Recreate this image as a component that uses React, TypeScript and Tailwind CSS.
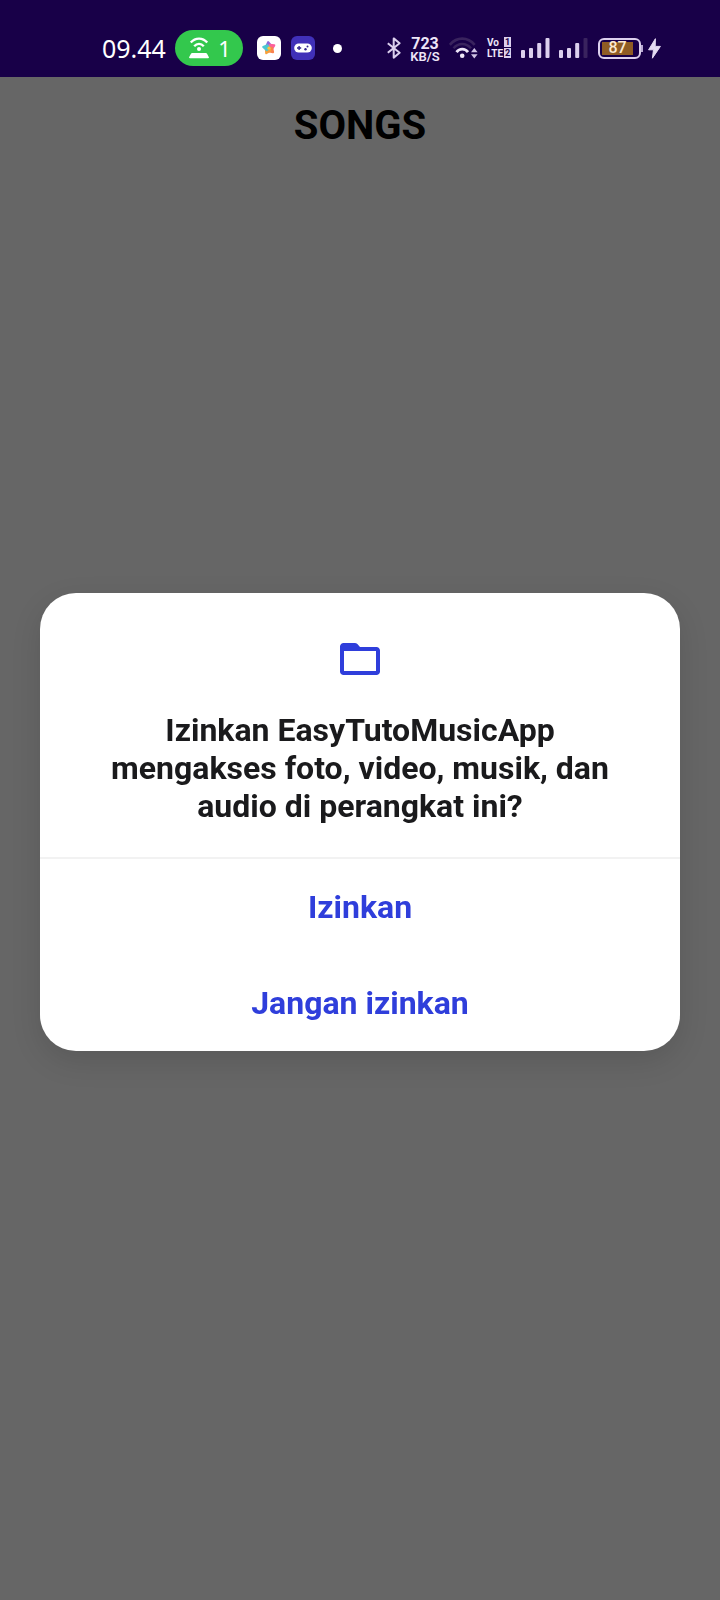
import React from "react";

function HotspotIcon() {
  return (
    <svg width="20" height="22" viewBox="0 0 20 22" fill="none" aria-hidden="true">
      <path d="M1.800 5.600C6.300.2 13.700.2 18.200 5.600" stroke="#fff" strokeWidth="2.300" />
      <path d="M5.200 9.200C8 6 12 6 14.800 9.200" stroke="#fff" strokeWidth="2.300" />
      <circle cx="10" cy="12" r="2" fill="#fff" />
      <path d="M3.200 16h13.600c.5 0 .9.200 1.100.6l1.900 3.400c.4.700 0 1.300-.8 1.300H1c-.8 0-1.200-.6-.8-1.300l1.900-3.400c.200-.4.600-.6 1.100-.6z" fill="#fff" />
    </svg>
  );
}

const petals = [
  { color: "#8d68dc", angle: -8 },
  { color: "#fb5f9c", angle: 64 },
  { color: "#f9824e", angle: 136 },
  { color: "#f8a03c", angle: 208 },
  { color: "#4cc6d2", angle: 280 },
];

function PetalsIcon() {
  return (
    <svg width="24" height="24" viewBox="0 0 24 24" aria-hidden="true">
      <rect width="24" height="24" rx="6" fill="#fff" />
      {petals.map((petal) => (
        <path
          key={petal.angle}
          d="M12 6.200L14.400 10 12 12.400 9.600 10z"
          fill={petal.color}
          stroke={petal.color}
          strokeWidth="2.200"
          strokeLinejoin="round"
          transform={`rotate(${petal.angle} 12 12)`}
        />
      ))}
      <circle cx="12" cy="12.200" r="1.600" fill="#ffc23f" />
    </svg>
  );
}

function GamepadIcon() {
  return (
    <svg width="24" height="24" viewBox="0 0 24 24" aria-hidden="true">
      <rect width="24" height="24" rx="6" fill="#4030b8" />
      <rect x="3.200" y="7.500" width="17.600" height="9" rx="4.500" fill="#fff" />
      <path d="M6 12h4.200M8.100 9.900v4.200" stroke="#33258f" strokeWidth="1.400" />
      <circle cx="16.500" cy="10.500" r="1" fill="#33258f" />
      <circle cx="14.500" cy="13.300" r="1.200" fill="#33258f" />
    </svg>
  );
}

function BluetoothIcon() {
  return (
    <svg width="14" height="22" viewBox="0 0 14 22" fill="none" stroke="#dcd0ee" strokeWidth="2" strokeLinejoin="round" aria-hidden="true">
      <path d="M.8 6.200l11.800 9.600L6.700 20.600V1.400l5.900 4.800L.8 15.800" />
    </svg>
  );
}

function WifiIcon() {
  return (
    <svg width="30" height="22" viewBox="0 0 30 22" fill="none" aria-hidden="true">
      <path d="M.8 7.800C7.800-.4 18.700-.4 25.700 7.800" stroke="#39235e" strokeWidth="2.600" />
      <path d="M4.500 11.200C9.400 5.600 17 5.600 22 11.200" stroke="#39235e" strokeWidth="2.400" />
      <path d="M7.500 15.200C10.500 11.200 16 11.200 19 15.200" stroke="#eee6f8" strokeWidth="2.800" />
      <circle cx="13.200" cy="18.800" r="2.300" fill="#eee6f8" />
      <path d="M22 15.200L25.300 11l3.300 4.200zM22 17.200L25.300 21.400l3.300-4.200z" fill="#d0c4e4" />
    </svg>
  );
}

function SignalIcon({ weak = false }: { weak?: boolean }) {
  return (
    <svg width="29" height="20" viewBox="0 0 29 20" fill="#dcd0ee" aria-hidden="true">
      <rect x="0" y="12" width="4" height="8" rx="1" />
      <rect x="8" y="10" width="4" height="10" rx="1" />
      <rect x="16.200" y="5" width="4" height="15" rx="1" />
      <rect x="24.500" y="0" width="4" height="20" rx="1" fill={weak ? "#39235e" : "#dcd0ee"} />
    </svg>
  );
}

function BoltIcon() {
  return (
    <svg width="13" height="21" viewBox="0 0 13 21" fill="#e4daf2" stroke="#e4daf2" strokeLinejoin="round" aria-hidden="true">
      <path d="M7.400.7L.6 11.800h4.900L4.400 20.200l8-11.800H7.200z" />
    </svg>
  );
}

function FolderIcon() {
  return (
    <svg width="40" height="32" viewBox="0 0 40 32" aria-hidden="true">
      <path
        fill="#2f3edb"
        fillRule="evenodd"
        d="M3.600 0h11.200c1 0 1.900.4 2.600 1.100L20 4h16.400C38.400 4 40 5.600 40 7.600v20.800c0 2-1.600 3.600-3.600 3.600H3.600C1.600 32 0 30.400 0 28.400V3.600C0 1.600 1.600 0 3.600 0zM4 8v20h32V8z"
      />
    </svg>
  );
}

function StatusBar() {
  return (
    <div className="flex h-[77px] items-center justify-between bg-[#180048] pt-[19px] pr-[59px] pl-[102px] text-white">
      <div className="flex items-center font-['Noto_Sans',sans-serif] text-[25px] leading-6">
        <time>09.44</time>
        <div className="ml-[9px] flex h-9 w-[68px] items-center justify-between rounded-full bg-[#33c84d] pr-3 pl-[14px]">
          <HotspotIcon />
          <span className="text-[22px]">1</span>
        </div>
        <div className="ml-[14px] flex items-center gap-[10px]">
          <PetalsIcon />
          <GamepadIcon />
        </div>
        <span className="ml-[18px] size-[9px] rounded-full bg-white" />
      </div>
      <div className="flex items-center text-[#eee6f8]">
        <BluetoothIcon />
        <div className="ml-[10px] flex w-7 flex-col items-center pt-[3px]">
          <span className="text-base leading-[13px] font-bold">723</span>
          <span className="text-[13px] leading-[13px] font-semibold">KB/S</span>
        </div>
        <div className="ml-[10px]">
          <WifiIcon />
        </div>
        <div className="ml-2 flex gap-px font-bold">
          <div className="flex w-4 flex-col text-[10px] leading-[11px]">
            <span>Vo</span>
            <span>LTE</span>
          </div>
          <div className="flex w-[7px] flex-col gap-px text-center text-[9px] leading-[10px] text-[#180048]">
            <span className="bg-[#dcd0ee]">1</span>
            <span className="bg-[#dcd0ee]">2</span>
          </div>
        </div>
        <div className="ml-[10px] flex items-center gap-[9px]">
          <SignalIcon />
          <SignalIcon weak />
        </div>
        <div className="ml-[10px] flex items-center">
          <div className="h-[21px] w-[43px] rounded-[6px] border-2 border-[#dcd0ee] p-[2px]">
            <div className="flex h-full w-[31px] items-center justify-center bg-[#8f5c24] text-base leading-4 font-medium text-[#fbe9d2]">87</div>
          </div>
          <span className="h-[7px] w-[2px] bg-[#b8a9d2]" />
        </div>
        <div className="ml-[5px]">
          <BoltIcon />
        </div>
      </div>
    </div>
  );
}

function PermissionDialog() {
  return (
    <div className="fixed inset-0 flex items-center justify-center px-10 pt-[44px]">
      <div
        role="dialog"
        aria-modal="true"
        aria-labelledby="permission-title"
        className="w-full max-w-[640px] overflow-hidden rounded-[36px] bg-white shadow-[0_10px_30px_rgba(0,0,0,0.12)]"
      >
        <div className="flex flex-col items-center gap-9 border-b-2 border-[#f2f2f2] px-16 pt-[50px] pb-8">
          <FolderIcon />
          <h2 id="permission-title" className="text-center text-[32px] leading-[38px] font-bold text-[#1a1a1c]">
            Izinkan EasyTutoMusicApp mengakses foto, video, musik, dan audio di perangkat ini?
          </h2>
        </div>
        <div className="flex flex-col text-[32px] font-bold text-[#2f3edb]">
          <button type="button" className="h-24">Izinkan</button>
          <button type="button" className="h-24">Jangan izinkan</button>
        </div>
      </div>
    </div>
  );
}

export default function App() {
  return (
    <div className="min-h-screen bg-[#666666] font-[Roboto,sans-serif]">
      <StatusBar />
      <main className="pt-[25px]">
        <h1 className="text-center text-[40px] leading-[48px] font-bold text-black">SONGS</h1>
      </main>
      <PermissionDialog />
    </div>
  );
}
